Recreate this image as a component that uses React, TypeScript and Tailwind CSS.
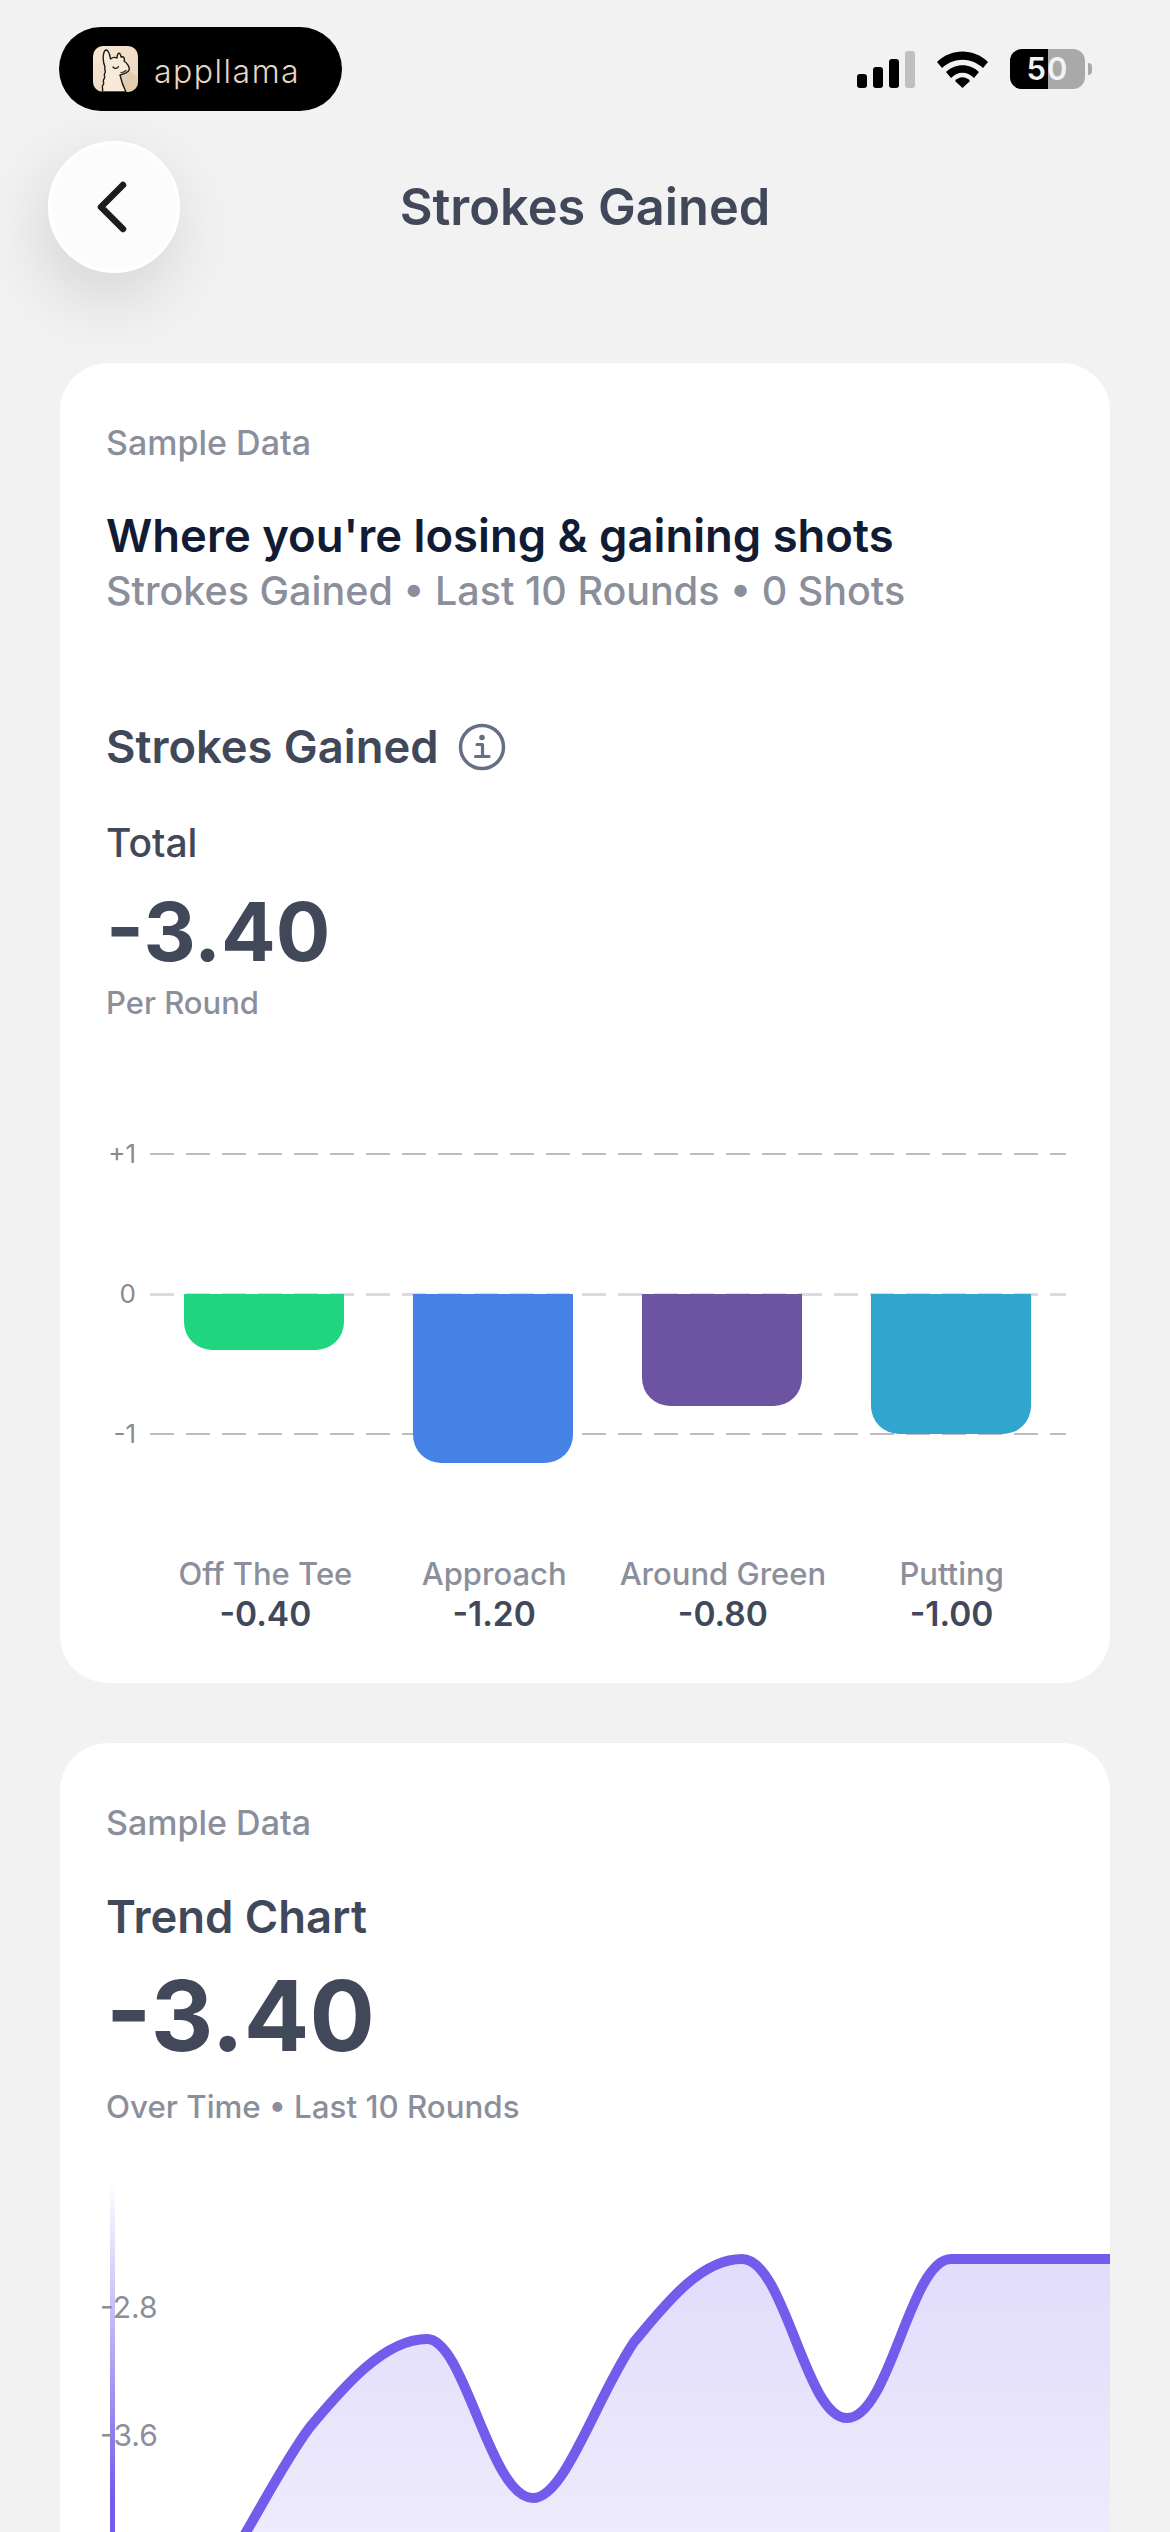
const bars = [
  { name: 'Off The Tee', value: '-0.40', color: 'bg-[#20d57f]', height: 'h-[56px]' },
  { name: 'Approach', value: '-1.20', color: 'bg-[#4682e6]', height: 'h-[169px]' },
  { name: 'Around Green', value: '-0.80', color: 'bg-[#6d54a3]', height: 'h-[112px]' },
  { name: 'Putting', value: '-1.00', color: 'bg-[#30a6ce]', height: 'h-[140px]' },
]

const gridRows = [
  { label: '+1', line: 'h-[2px] bg-[repeating-linear-gradient(90deg,#bdbdc0_0_24px,transparent_24px_36px)]' },
  { label: '0', line: 'h-[3px] bg-[repeating-linear-gradient(90deg,#dcdce0_0_24px,transparent_24px_36px)]' },
  { label: '-1', line: 'h-[2px] bg-[repeating-linear-gradient(90deg,#bdbdc0_0_24px,transparent_24px_36px)]' },
]

const curve =
  'M 232 2556 C 260 2510 285 2460 310 2427 C 345 2385 385 2339 427 2339 C 465 2339 490 2498 533 2498 C 565 2498 595 2400 634 2342 C 665 2305 700 2259 742 2259 C 785 2259 805 2418 847 2418 C 890 2418 910 2259 951 2259 L 1110 2259'

function LlamaLogo() {
  return (
    <svg width="45" height="46" viewBox="0 0 45 46">
      <defs>
        <linearGradient id="llamaBg" x1="0" y1="0" x2="1" y2="1">
          <stop offset="0" stopColor="#f7e8d6" />
          <stop offset="1" stopColor="#ebd4b8" />
        </linearGradient>
        <clipPath id="llamaClip">
          <rect width="45" height="46" rx="10" />
        </clipPath>
      </defs>
      <g clipPath="url(#llamaClip)">
        <rect width="45" height="46" fill="url(#llamaBg)" />
        <path d="M36 24 L45 32 V46 H33 L27 29 Z" fill="#dcc3a3" opacity="0.55" />
        <path
          d="M9 46 C11 43 8 41 10 39 C12 37 9 35 11 33 C13 31 10 29 12 27 C13 25 11 23 12 21 C9 14 10 5 13 4 C16 4 17 10 17.5 13 C20 11 22 11 24 12 C24 8 26 6 27 8 C28 9 28 10 28 11 C31 10 32 13 31 15 C34 17 37 21 36 24 C35 27 31 28 27 29 C28 34 30 40 33 46 Z"
          fill="#f8ead9"
          stroke="#1c1a18"
          strokeWidth="1.4"
          strokeLinejoin="round"
          strokeLinecap="round"
        />
        <path d="M20 21 C21.5 23 24 23 25.5 20.5" fill="none" stroke="#1c1a18" strokeWidth="1.3" strokeLinecap="round" />
        <path d="M28 26.5 C30.5 26.5 32 25.5 33 24.5" fill="none" stroke="#1c1a18" strokeWidth="1.1" strokeLinecap="round" />
      </g>
    </svg>
  )
}

function StatusIcons() {
  return (
    <div className="flex items-center">
      <div className="flex items-end gap-[6px]">
        <div className="w-[10px] h-[14px] rounded-[3px] bg-black" />
        <div className="w-[10px] h-[21px] rounded-[3px] bg-black" />
        <div className="w-[10px] h-[29px] rounded-[3px] bg-black" />
        <div className="w-[10px] h-[37px] rounded-[3px] bg-[#c0c0c0]" />
      </div>
      <svg className="ml-[22px]" width="51" height="37" viewBox="0 0 51 37">
        <path d="M0 11 C14 -3 37 -3 51 11 L46 17 C34 6 17 6 5 17 Z" fill="#000" />
        <path d="M9 21 C18 12 33 12 42 21 L37 27 C30 20 21 20 14 27 Z" fill="#000" />
        <path d="M18 30 C22 25 29 25 33 30 L25.5 37 Z" fill="#000" />
      </svg>
      <div className="ml-[22px] relative w-[75px] h-[40px] rounded-[12px] overflow-hidden bg-[#a9a9a9]">
        <div className="absolute left-0 top-0 bottom-0 w-[38px] bg-black" />
        <div className="absolute inset-0 flex items-center justify-center text-[#f2f2f2] text-[31px] font-semibold tracking-[1px]">
          50
        </div>
      </div>
      <div className="ml-[3px] w-[4px] h-[12px] rounded-r-[4px] bg-[#a9a9a9]" />
    </div>
  )
}

function InfoIcon() {
  return (
    <svg width="48" height="48" viewBox="0 0 48 48" fill="none">
      <circle cx="24" cy="24" r="21.5" stroke="#667085" strokeWidth="3.5" />
      <circle cx="24" cy="14.5" r="2.8" fill="#667085" />
      <path d="M19 21.5 H24.5 V33.5 M17.5 33.5 H31" stroke="#667085" strokeWidth="3.2" strokeLinecap="round" strokeLinejoin="round" />
    </svg>
  )
}

function BarChart() {
  return (
    <div className="relative mt-[121px] -mr-[2px]">
      <div className="flex flex-col gap-[120px]">
        {gridRows.map((row) => (
          <div key={row.label} className="flex items-center h-[20px]">
            <span className="w-[30px] text-right text-[26px] leading-[20px] text-[#8a8a8a]">{row.label}</span>
            <div className={`ml-[14px] flex-1 ${row.line}`} />
          </div>
        ))}
      </div>
      <div className="absolute left-[78px] top-[150px] flex gap-[69px]">
        {bars.map((bar) => (
          <div key={bar.name} className={`w-[160px] rounded-b-[28px] ${bar.color} ${bar.height}`} />
        ))}
      </div>
      <div className="mt-[110px] ml-[45px] flex">
        {bars.map((bar) => (
          <div key={bar.name} className="w-[229px] flex flex-col items-center whitespace-nowrap">
            <span className="text-[31px] leading-[40px] font-medium text-[#8b8f9b]">{bar.name}</span>
            <span className="text-[33.5px] leading-[40px] font-semibold text-[#414859]">{bar.value}</span>
          </div>
        ))}
      </div>
    </div>
  )
}

function TrendChart() {
  return (
    <div className="relative mt-[53px] h-[360px]">
      <svg className="absolute -left-[106px] top-0" width="1110" height="360" viewBox="0 2180 1110 360">
        <defs>
          <linearGradient id="areaFill" x1="0" y1="2259" x2="0" y2="2532" gradientUnits="userSpaceOnUse">
            <stop offset="0" stopColor="#e2dcfb" />
            <stop offset="1" stopColor="#eeebfc" />
          </linearGradient>
          <linearGradient id="axisFade" x1="0" y1="2183" x2="0" y2="2500" gradientUnits="userSpaceOnUse">
            <stop offset="0" stopColor="#735beb" stopOpacity="0" />
            <stop offset="1" stopColor="#735beb" />
          </linearGradient>
        </defs>
        <path d={`${curve} L 1110 2560 L 232 2560 Z`} fill="url(#areaFill)" />
        <path d={curve} fill="none" stroke="#735beb" strokeWidth="10" />
        <rect x="110" y="2183" width="5" height="357" fill="url(#axisFade)" />
      </svg>
      <span className="absolute -left-[6px] top-[107px] text-[30px] leading-[40px] text-[#8b8f9b]">-2.8</span>
      <span className="absolute -left-[6px] top-[235px] text-[30px] leading-[40px] text-[#8b8f9b]">-3.6</span>
    </div>
  )
}

export default function App() {
  return (
    <div className="h-[2532px] overflow-hidden bg-[#f2f2f2] font-['Inter',sans-serif]">
      <div className="flex items-center justify-between pt-[27px] pl-[59px] pr-[78px]">
        <div className="flex items-center w-[283px] h-[84px] rounded-full bg-black pl-[34px]">
          <LlamaLogo />
          <span className="ml-[16px] pt-[6px] font-light text-[32px] leading-none tracking-[1.5px] text-[#e6d5c3]">
            appllama
          </span>
        </div>
        <StatusIcons />
      </div>

      <div className="mt-[30px] grid grid-cols-[1fr_auto_1fr] items-center pl-[48px]">
        <button className="w-[132px] h-[132px] rounded-full flex items-center justify-center bg-[#fcfcfc] border-[3px] border-white shadow-[-6px_24px_70px_rgba(0,0,0,0.13)]">
          <svg className="-ml-[4px]" width="32" height="54" viewBox="0 0 32 54" fill="none">
            <path d="M27 5 L5 27 L27 49" stroke="#1c1c1e" strokeWidth="6.5" strokeLinecap="round" strokeLinejoin="round" />
          </svg>
        </button>
        <h1 className="text-[50.5px] leading-none font-semibold text-[#414859] -ml-[48px]">Strokes Gained</h1>
        <div />
      </div>

      <div className="mx-[60px] mt-[90px] h-[1320px] rounded-[48px] bg-white px-[46px] pt-[60px]">
        <p className="text-[34px] leading-[40px] font-medium text-[#8b8f9b]">Sample Data</p>
        <p className="mt-[46px] text-[45.4px] leading-[54px] font-semibold text-[#111b33]">
          Where you're losing &amp; gaining shots
        </p>
        <p className="mt-[3px] text-[39.5px] leading-[50px] font-medium text-[#8b8f9b]">
          Strokes Gained • Last 10 Rounds • 0 Shots
        </p>

        <div className="mt-[103px] flex items-center">
          <span className="text-[45.3px] leading-[56px] font-semibold text-[#414859]">Strokes Gained</span>
          <span className="ml-[20px]">
            <InfoIcon />
          </span>
        </div>
        <p className="mt-[44px] text-[39px] leading-[48px] font-medium text-[#414859]">Total</p>
        <p className="mt-[20px] text-[81px] leading-[90px] font-bold text-[#414859]">-3.40</p>
        <p className="mt-[6px] text-[31px] leading-[40px] font-medium text-[#8b8f9b]">Per Round</p>

        <BarChart />
      </div>

      <div className="mx-[60px] mt-[60px] h-[900px] overflow-hidden rounded-[48px] bg-white px-[46px] pt-[60px]">
        <p className="text-[34px] leading-[40px] font-medium text-[#8b8f9b]">Sample Data</p>
        <p className="mt-[46px] text-[45.4px] leading-[56px] font-semibold text-[#414859]">Trend Chart</p>
        <p className="mt-[21px] text-[97px] leading-[100px] font-bold text-[#414859]">-3.40</p>
        <p className="mt-[21px] text-[31.3px] leading-[40px] font-medium text-[#8b8f9b]">Over Time • Last 10 Rounds</p>
        <TrendChart />
      </div>
    </div>
  )
}
